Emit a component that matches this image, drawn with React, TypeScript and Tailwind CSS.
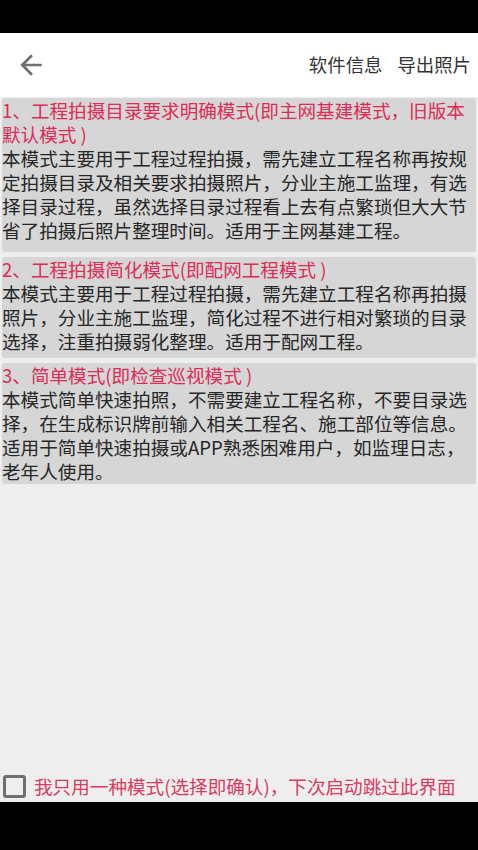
import React from 'react';

const font = { fontFamily: '"Noto Sans CJK SC", "Noto Sans", sans-serif' };

type Mode = {
  title: string[];
  body: string[];
  pad: string;
};

const modes: Mode[] = [
  {
    title: ['1、工程拍摄目录要求明确模式(即主网基建模式，旧版本', '默认模式 )'],
    body: [
      '本模式主要用于工程过程拍摄，需先建立工程名称再按规',
      '定拍摄目录及相关要求拍摄照片，分业主施工监理，有选',
      '择目录过程，虽然选择目录过程看上去有点繁琐但大大节',
      '省了拍摄后照片整理时间。适用于主网基建工程。',
    ],
    pad: 'pb-[10px]',
  },
  {
    title: ['2、工程拍摄简化模式(即配网工程模式 )'],
    body: [
      '本模式主要用于工程过程拍摄，需先建立工程名称再拍摄',
      '照片，分业主施工监理，简化过程不进行相对繁琐的目录',
      '选择，注重拍摄弱化整理。适用于配网工程。',
    ],
    pad: 'pb-[5px]',
  },
  {
    title: ['3、简单模式(即检查巡视模式 )'],
    body: [
      '本模式简单快速拍照，不需要建立工程名称，不要目录选',
      '择，在生成标识牌前输入相关工程名、施工部位等信息。',
      '适用于简单快速拍摄或APP熟悉困难用户，如监理日志，',
      '老年人使用。',
    ],
    pad: 'pb-[1px]',
  },
];

const ModeCard = ({ mode }: { mode: Mode }) => (
  <div className={`mx-[2px] rounded-[3px] bg-[#d6d6d6] ${mode.pad}`}>
    {mode.title.map((line) => (
      <div key={line} className="whitespace-nowrap text-[18.6px] leading-[24px] text-[#dc2c56]">
        {line}
      </div>
    ))}
    {mode.body.map((line) => (
      <div key={line} className="whitespace-nowrap text-[18.6px] leading-[24px] text-[#262626]">
        {line}
      </div>
    ))}
  </div>
);

export default function App() {
  return (
    <div className="flex h-[850px] w-[478px] flex-col overflow-hidden bg-[#eeeeee]" style={font}>
      <div className="h-[33px] shrink-0 bg-black" />

      <div className="flex h-[64px] shrink-0 items-center justify-between bg-white pl-[15px] pr-[7px]">
        <svg width="32" height="32" viewBox="0 0 24 24" fill="#6f6f6f">
          <path d="M20 11H7.83l5.59-5.59L12 4l-8 8 8 8 1.41-1.41L7.83 13H20v-2z" />
        </svg>
        <div className="flex gap-[15px] text-[18.4px] text-[#333333]">
          <span>软件信息</span>
          <span>导出照片</span>
        </div>
      </div>

      <div className="flex flex-1 flex-col pt-[1px]">
        <div className="flex flex-col gap-[5px]">
          {modes.map((m) => (
            <ModeCard key={m.title[0]} mode={m} />
          ))}
        </div>

        <div className="mt-auto flex items-center gap-[8px] pb-[4px] pl-[3px]">
          <div className="h-[23px] w-[23px] rounded-[3px] border-[3px] border-[#6f6f6f]" />
          <span className="text-[18.6px] leading-[24px] text-[#d93a62]">
            我只用一种模式(选择即确认)，下次启动跳过此界面
          </span>
        </div>
      </div>

      <div className="h-[48px] shrink-0 bg-black" />
    </div>
  );
}
